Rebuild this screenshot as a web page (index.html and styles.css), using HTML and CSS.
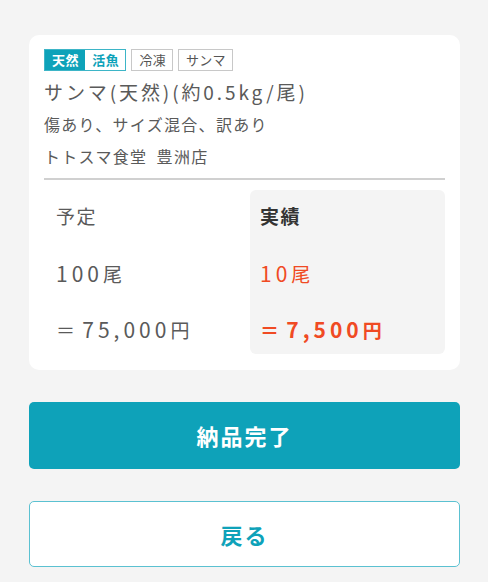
FILE: index.html
```html
<!DOCTYPE html>
<html lang="ja">
<head>
  <meta charset="UTF-8" />
  <meta name="viewport" content="width=device-width, initial-scale=1.0" />
  <title>納品確認</title>
  <link rel="stylesheet" href="styles.css">
</head>
<body>
  <div class="page">
    <!-- Item card -->
    <div class="card">
      <div class="tags">
        <span class="tag-pair">
          <span class="tag tag-fill">天然</span><span class="tag tag-line">活魚</span>
        </span>
        <span class="tag tag-gray">冷凍</span>
        <span class="tag tag-gray">サンマ</span>
      </div>
      <div class="title">サンマ(天然)(約0.5kg/尾)</div>
      <div class="line">傷あり、サイズ混合、訳あり</div>
      <div class="line">トトスマ食堂&ensp;豊洲店</div>

      <div class="divider"></div>

      <div class="compare">
        <div class="col col-plan">
          <div class="row">予定</div>
          <div class="row"><span class="num">100</span>尾</div>
          <div class="row">＝ <span class="num">75,000</span>円</div>
        </div>
        <div class="col col-actual">
          <div class="row head">実績</div>
          <div class="row red"><span class="num">10</span>尾</div>
          <div class="row red strong">＝ <span class="num">7,500</span>円</div>
        </div>
      </div>
    </div>

    <!-- Buttons -->
    <a href="#" class="btn btn-primary">納品完了</a>
    <a href="#" class="btn btn-outline">戻る</a>
  </div>
</body>
</html>
```

FILE: styles.css
```css
body, html {
  margin: 0;
  padding: 0;
  background-color: #f4f4f4;
  color: #5a5a5a;
  font-family: "Noto Sans CJK JP", "Noto Sans", sans-serif;
}

.page {
  padding: 35px 28px 0 29px;
  display: flex;
  flex-direction: column;
}

/* Item card */
.card {
  background-color: #fff;
  border-radius: 10px;
  padding: 14px 15px 16px 15px;
}

.tags {
  display: flex;
  gap: 5px;
  margin-bottom: 5px;
}

.tag-pair {
  display: flex;
  border: 1px solid #3db5c7;
}

.tag {
  height: 20px;
  line-height: 20px;
  font-size: 13px;
  letter-spacing: 0.6px;
  padding: 0 6px 0 7px;
}

.tag-fill {
  background-color: #0ea2b9;
  color: #fff;
  font-weight: bold;
}

.tag-line {
  color: #0ea2b9;
  font-weight: bold;
}

.tag-gray {
  border: 1px solid #c8c8c8;
  color: #555;
  letter-spacing: 0.3px;
}

.title {
  font-size: 19px;
  line-height: 32px;
  letter-spacing: 2.9px;
}

.line {
  font-size: 16px;
  line-height: 32px;
  letter-spacing: 1.3px;
}

.divider {
  height: 2px;
  background-color: #d0d0d0;
  margin: 6px 0 10px 0;
}

/* Planned vs actual */
.compare {
  display: flex;
}

.col {
  display: flex;
  flex-direction: column;
  gap: 38.5px;
  padding: 17px 10px 16px 10px;
}

.col-plan {
  flex: 1;
  padding-left: 12px;
}

.col-actual {
  width: 175px;
  background-color: #f4f4f4;
  border-radius: 6px;
}

.row {
  height: 18px;
  font-size: 19px;
  line-height: 18px;
  letter-spacing: 1.5px;
  white-space: nowrap;
}

.num {
  font-size: 21px;
  letter-spacing: 4px;
}

.head {
  color: #333;
  font-weight: bold;
}

.red {
  color: #f04a23;
}

.strong {
  font-weight: bold;
}

/* Buttons */
.btn {
  display: block;
  height: 67px;
  line-height: 67px;
  border-radius: 5px;
  text-align: center;
  text-decoration: none;
  font-size: 22px;
  font-weight: bold;
  letter-spacing: 2px;
  box-sizing: border-box;
}

.btn-primary {
  margin-top: 32px;
  background-color: #0ea2b9;
  color: #fff;
}

.btn-outline {
  margin-top: 32px;
  background-color: #fff;
  color: #0ea2b9;
  border: 1px solid #5bc1d1;
  line-height: 64px;
  height: 66px;
}
```
